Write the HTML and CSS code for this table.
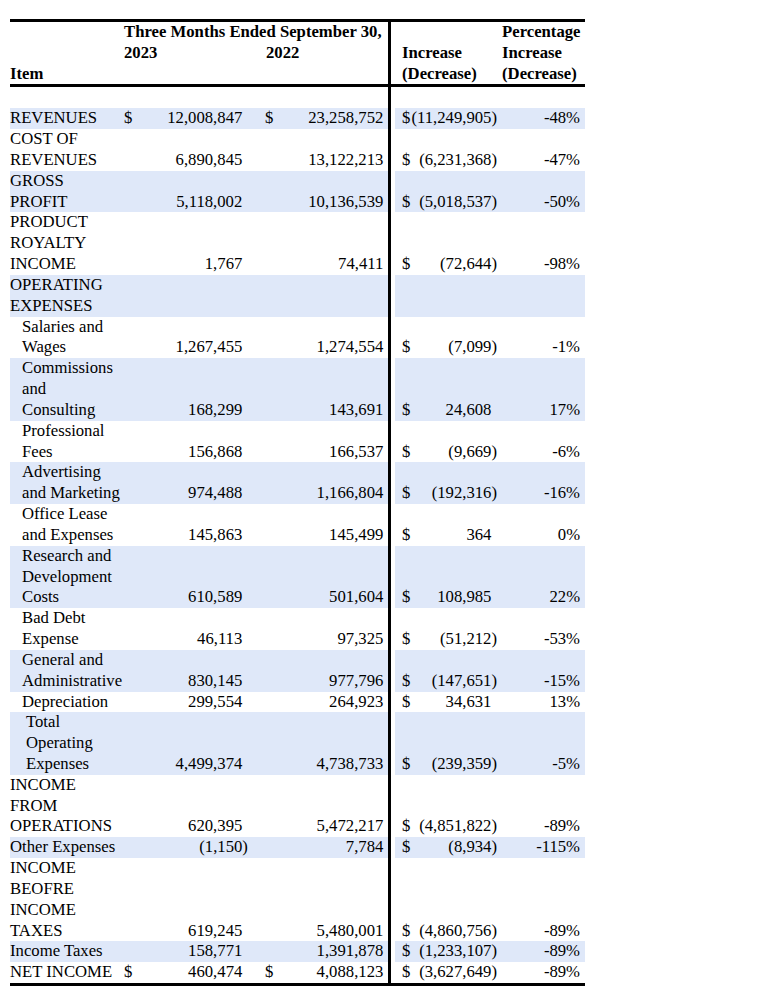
FILE: index.html
```html
<!DOCTYPE html>
<html lang="en">
<head>
<meta charset="utf-8">
<title>Three Months Ended September 30</title>
<link rel="stylesheet" href="styles.css">
</head>
<body>
<div class="page">
<table class="fin">
<colgroup>
<col class="c-item"><col class="c-d1"><col class="c-v1"><col class="c-d2"><col class="c-v2"><col class="c-d3"><col class="c-v3"><col class="c-pct">
</colgroup>
<thead>
<tr class="hrow">
<th rowspan="3" class="h-item hb">Item</th>
<th colspan="4" class="h-period">Three Months Ended September 30,</th>
<th colspan="2" rowspan="3" class="h-inc d3 hb">Increase<br>(Decrease)</th>
<th rowspan="3" class="h-pct hb">Percentage<br>Increase<br>(Decrease)</th>
</tr>
<tr class="hrow">
<th colspan="2" class="h-year">2023</th>
<th colspan="2" class="h-year h-year2">2022</th>
</tr>
<tr class="hrow hlast">
<th colspan="4" class="h-fill hb"></th>
</tr>
</thead>
<tbody>
<tr class="spacer"><td colspan="5"></td><td colspan="3" class="d3"></td></tr>
<tr class="band"><td class="item">REVENUES</td><td class="d">$</td><td class="v v1">12,008,847</td><td class="d d2">$</td><td class="v v2">23,258,752</td><td class="d d3">$</td><td class="v v3 neg">(11,249,905)</td><td class="pct">-48%</td></tr>
<tr><td class="item">COST OF<br>REVENUES</td><td class="d"></td><td class="v v1">6,890,845</td><td class="d d2"></td><td class="v v2">13,122,213</td><td class="d d3">$</td><td class="v v3 neg">(6,231,368)</td><td class="pct">-47%</td></tr>
<tr class="band"><td class="item">GROSS<br>PROFIT</td><td class="d"></td><td class="v v1">5,118,002</td><td class="d d2"></td><td class="v v2">10,136,539</td><td class="d d3">$</td><td class="v v3 neg">(5,018,537)</td><td class="pct">-50%</td></tr>
<tr><td class="item">PRODUCT<br>ROYALTY<br>INCOME</td><td class="d"></td><td class="v v1">1,767</td><td class="d d2"></td><td class="v v2">74,411</td><td class="d d3">$</td><td class="v v3 neg">(72,644)</td><td class="pct">-98%</td></tr>
<tr class="band"><td class="item">OPERATING<br>EXPENSES</td><td class="d"></td><td class="v v1"></td><td class="d d2"></td><td class="v v2"></td><td class="d d3"></td><td class="v v3"></td><td class="pct"></td></tr>
<tr><td class="item sub">Salaries and<br>Wages</td><td class="d"></td><td class="v v1">1,267,455</td><td class="d d2"></td><td class="v v2">1,274,554</td><td class="d d3">$</td><td class="v v3 neg">(7,099)</td><td class="pct">-1%</td></tr>
<tr class="band"><td class="item sub">Commissions<br>and<br>Consulting</td><td class="d"></td><td class="v v1">168,299</td><td class="d d2"></td><td class="v v2">143,691</td><td class="d d3">$</td><td class="v v3">24,608</td><td class="pct">17%</td></tr>
<tr><td class="item sub">Professional<br>Fees</td><td class="d"></td><td class="v v1">156,868</td><td class="d d2"></td><td class="v v2">166,537</td><td class="d d3">$</td><td class="v v3 neg">(9,669)</td><td class="pct">-6%</td></tr>
<tr class="band"><td class="item sub">Advertising<br>and Marketing</td><td class="d"></td><td class="v v1">974,488</td><td class="d d2"></td><td class="v v2">1,166,804</td><td class="d d3">$</td><td class="v v3 neg">(192,316)</td><td class="pct">-16%</td></tr>
<tr><td class="item sub">Office Lease<br>and Expenses</td><td class="d"></td><td class="v v1">145,863</td><td class="d d2"></td><td class="v v2">145,499</td><td class="d d3">$</td><td class="v v3">364</td><td class="pct">0%</td></tr>
<tr class="band"><td class="item sub">Research and<br>Development<br>Costs</td><td class="d"></td><td class="v v1">610,589</td><td class="d d2"></td><td class="v v2">501,604</td><td class="d d3">$</td><td class="v v3">108,985</td><td class="pct">22%</td></tr>
<tr><td class="item sub">Bad Debt<br>Expense</td><td class="d"></td><td class="v v1">46,113</td><td class="d d2"></td><td class="v v2">97,325</td><td class="d d3">$</td><td class="v v3 neg">(51,212)</td><td class="pct">-53%</td></tr>
<tr class="band"><td class="item sub">General and<br>Administrative</td><td class="d"></td><td class="v v1">830,145</td><td class="d d2"></td><td class="v v2">977,796</td><td class="d d3">$</td><td class="v v3 neg">(147,651)</td><td class="pct">-15%</td></tr>
<tr><td class="item sub">Depreciation</td><td class="d"></td><td class="v v1">299,554</td><td class="d d2"></td><td class="v v2">264,923</td><td class="d d3">$</td><td class="v v3">34,631</td><td class="pct">13%</td></tr>
<tr class="band"><td class="item total">Total<br>Operating<br>Expenses</td><td class="d"></td><td class="v v1">4,499,374</td><td class="d d2"></td><td class="v v2">4,738,733</td><td class="d d3">$</td><td class="v v3 neg">(239,359)</td><td class="pct">-5%</td></tr>
<tr><td class="item">INCOME<br>FROM<br>OPERATIONS</td><td class="d"></td><td class="v v1">620,395</td><td class="d d2"></td><td class="v v2">5,472,217</td><td class="d d3">$</td><td class="v v3 neg">(4,851,822)</td><td class="pct">-89%</td></tr>
<tr class="band"><td class="item">Other Expenses</td><td class="d"></td><td class="v v1 neg">(1,150)</td><td class="d d2"></td><td class="v v2">7,784</td><td class="d d3">$</td><td class="v v3 neg">(8,934)</td><td class="pct">-115%</td></tr>
<tr><td class="item">INCOME<br>BEOFRE<br>INCOME<br>TAXES</td><td class="d"></td><td class="v v1">619,245</td><td class="d d2"></td><td class="v v2">5,480,001</td><td class="d d3">$</td><td class="v v3 neg">(4,860,756)</td><td class="pct">-89%</td></tr>
<tr class="band"><td class="item">Income Taxes</td><td class="d"></td><td class="v v1">158,771</td><td class="d d2"></td><td class="v v2">1,391,878</td><td class="d d3">$</td><td class="v v3 neg">(1,233,107)</td><td class="pct">-89%</td></tr>
<tr><td class="item net">NET INCOME</td><td class="d">$</td><td class="v v1">460,474</td><td class="d d2">$</td><td class="v v2">4,088,123</td><td class="d d3">$</td><td class="v v3 neg">(3,627,649)</td><td class="pct">-89%</td></tr>
</tbody>
</table>
</div>
</body>
</html>
```

FILE: styles.css
```css
html, body {
  margin: 0;
  padding: 0;
  background: #fff;
}

.page {
  padding: 19px 0 0 10px;
}

.fin {
  --band: #dfe8f9;
  width: 575px;
  table-layout: fixed;
  border-collapse: separate;
  border-spacing: 0;
  border-top: 3px solid #000;
  border-bottom: 3px solid #000;
  font-family: "Liberation Serif", "Times New Roman", serif;
  font-size: 16.7px;
  line-height: 20.83px;
  color: #000;
}

.c-item { width: 114px; }
.c-d1 { width: 20px; }
.c-v1 { width: 120px; }
.c-d2 { width: 20px; }
.c-v2 { width: 104px; }
.c-d3 { width: 23px; }
.c-v3 { width: 88px; }
.c-pct { width: 86px; }

.fin th,
.fin td {
  padding: 0;
  vertical-align: bottom;
  white-space: nowrap;
  text-align: left;
}

.fin th {
  font-weight: bold;
}

.hrow { height: 20.83px; }
.hlast { height: 23.83px; }

.hb {
  border-bottom: 3px solid #000;
}

.h-period,
.h-year {
  vertical-align: top;
}

.fin .h-year2 { padding-left: 2px; }
.fin .h-inc { padding-left: 11px; }
.fin .h-pct { padding-left: 3px; }

.spacer { height: 20.83px; }

.fin .sub { padding-left: 12px; }
.fin .total { padding-left: 16px; }

.fin .d2 { padding-left: 1px; }
.fin .d3 {
  border-left: 3px solid #000;
  padding-left: 11px;
}

.fin .v { text-align: right; }
.fin .v1 { padding-right: 21.7px; }
.fin .v1.neg { padding-right: 16.1px; }
.fin .v2 { padding-right: 4.7px; }
.fin .v3 { padding-right: 7.6px; }
.fin .v3.neg { padding-right: 2px; }
.fin .pct {
  text-align: right;
  padding-right: 5px;
}

.band td {
  background: var(--band);
}

.band td.d3 {
  background: linear-gradient(90deg, #fff 0 4px, var(--band) 4px);
}
```
